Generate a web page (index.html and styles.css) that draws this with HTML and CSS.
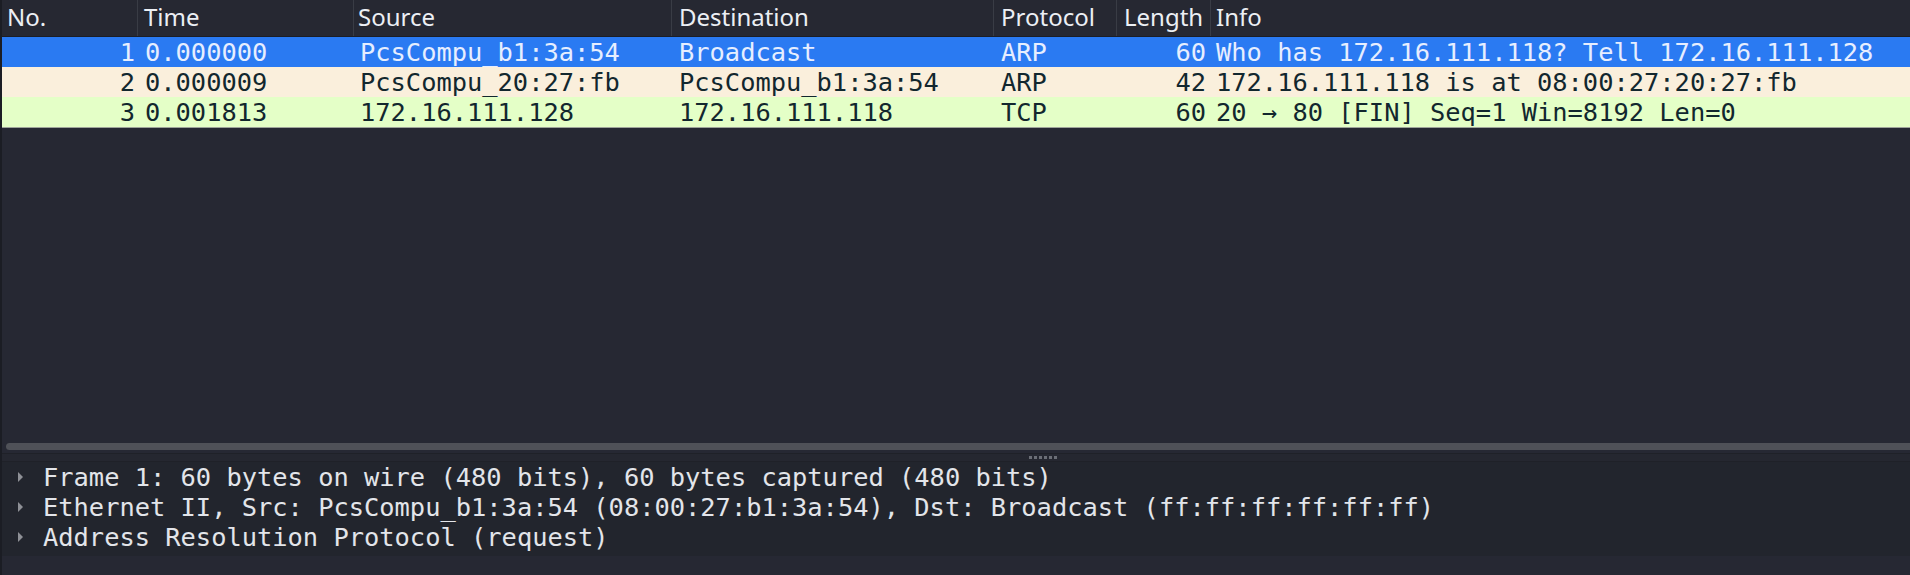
FILE: index.html
```html
<!DOCTYPE html>
<html>
<head>
<meta charset="utf-8">
<link rel="stylesheet" href="styles.css">
</head>
<body>
<div class="app">
  <section class="plist">
    <div class="row head">
      <div class="c c-no">No.</div>
      <div class="c c-time">Time</div>
      <div class="c c-src">Source</div>
      <div class="c">Destination</div>
      <div class="c">Protocol</div>
      <div class="c">Length</div>
      <div class="c c-info">Info</div>
    </div>
    <div class="row pkt sel">
      <div class="c num">1</div>
      <div class="c">0.000000</div>
      <div class="c c-src">PcsCompu_b1:3a:54</div>
      <div class="c">Broadcast</div>
      <div class="c">ARP</div>
      <div class="c len">60</div>
      <div class="c c-info">Who has 172.16.111.118? Tell 172.16.111.128</div>
    </div>
    <div class="row pkt arp">
      <div class="c num">2</div>
      <div class="c">0.000009</div>
      <div class="c c-src">PcsCompu_20:27:fb</div>
      <div class="c">PcsCompu_b1:3a:54</div>
      <div class="c">ARP</div>
      <div class="c len">42</div>
      <div class="c c-info">172.16.111.118 is at 08:00:27:20:27:fb</div>
    </div>
    <div class="row pkt http">
      <div class="c num">3</div>
      <div class="c">0.001813</div>
      <div class="c c-src">172.16.111.128</div>
      <div class="c">172.16.111.118</div>
      <div class="c">TCP</div>
      <div class="c len">60</div>
      <div class="c c-info">20 → 80 [FIN] Seq=1 Win=8192 Len=0</div>
    </div>
    <div class="empty"></div>
    <div class="hscroll"><div class="thumb"></div></div>
  </section>
  <div class="splitter"><span class="grip"><i></i><i></i><i></i><i></i><i></i><i></i></span></div>
  <section class="details">
    <div class="tree">
      <div class="node"><span class="arrow"></span><span class="label">Frame 1: 60 bytes on wire (480 bits), 60 bytes captured (480 bits)</span></div>
      <div class="node"><span class="arrow"></span><span class="label">Ethernet II, Src: PcsCompu_b1:3a:54 (08:00:27:b1:3a:54), Dst: Broadcast (ff:ff:ff:ff:ff:ff)</span></div>
      <div class="node"><span class="arrow"></span><span class="label">Address Resolution Protocol (request)</span></div>
    </div>
  </section>
</div>
</body>
</html>
```
FILE: styles.css
```css
html, body {
  margin: 0;
  padding: 0;
  background: #262833;
}
body {
  width: 1910px;
  height: 575px;
  overflow: hidden;
}
.app {
  display: flex;
  flex-direction: column;
  height: 575px;
  border-left: 2px solid #1b1d24;
  box-sizing: border-box;
}
.plist {
  display: flex;
  flex-direction: column;
  height: 453px;
  flex: none;
}
.row {
  display: grid;
  grid-template-columns: 136px 216px 318px 322px 123px 94px 1fr;
  align-items: center;
}
.head {
  height: 36px;
  border-bottom: 1px solid #1c1e25;
  background: #262832;
  font-family: "Noto Sans", "DejaVu Sans", sans-serif;
  font-size: 24px;
  color: #eceff4;
  align-items: stretch;
}
.head .c {
  border-right: 1px solid #393c45;
  padding-left: 7px;
  line-height: 34px;
  white-space: nowrap;
  overflow: hidden;
}
.head .c-no { padding-left: 5px; }
.head .c-time { padding-left: 6px; }
.head .c-src { padding-left: 4px; }
.head .c-info { border-right: none; padding-left: 5px; }
.pkt {
  height: 30px;
  font-family: "DejaVu Sans Mono", "Liberation Mono", monospace;
  font-size: 25.4px;
  line-height: 30px;
  white-space: nowrap;
}
.pkt .c {
  padding-left: 7px;
  overflow: hidden;
}
.pkt .c-src { padding-left: 6px; }
.pkt .c-info { padding-left: 5px; }
.pkt .num, .pkt .len {
  text-align: right;
  padding-left: 0;
  padding-right: 3px;
}
.pkt .len { padding-right: 5px; }
.sel { background: #2a7af2; color: #e6eeff; }
.arp { background: #faefdc; color: #12272e; }
.http {
  background: #e4ffc7;
  color: #12272e;
  border-bottom: 1px solid #9ea59a;
  height: 30px;
}
.empty {
  flex: 1;
  background: #262833;
}
.hscroll {
  height: 12px;
  padding: 2px 0 3px 4px;
  box-sizing: border-box;
  background: #262833;
  overflow: hidden;
}
.thumb {
  height: 7px;
  width: 2000px;
  border-radius: 4px;
  background: #4f5158;
}
.splitter {
  height: 9px;
  flex: none;
  background: #252730;
  border-top: 1px solid #1f2128;
  border-bottom: 1px solid #1f2128;
  box-sizing: border-box;
  display: flex;
  justify-content: center;
  align-items: center;
}
.grip {
  display: flex;
  gap: 2px;
  margin-left: 174px;
}
.grip i {
  width: 3px;
  height: 3px;
  background: #6b6e76;
}
.details {
  flex: 1;
  background: #262833;
}
.tree {
  background: #22252d;
  padding: 0 0 3px;
  height: 94px;
  box-sizing: border-box;
}
.node {
  height: 30px;
  display: flex;
  align-items: center;
  font-family: "DejaVu Sans Mono", "Liberation Mono", monospace;
  font-size: 25.4px;
  color: #e3e5ea;
  white-space: nowrap;
}
.arrow {
  width: 0;
  height: 0;
  border-top: 5px solid transparent;
  border-bottom: 5px solid transparent;
  border-left: 5px solid #8e9096;
  margin-left: 16px;
  margin-right: 20px;
}
.label { line-height: 30px; }
```
